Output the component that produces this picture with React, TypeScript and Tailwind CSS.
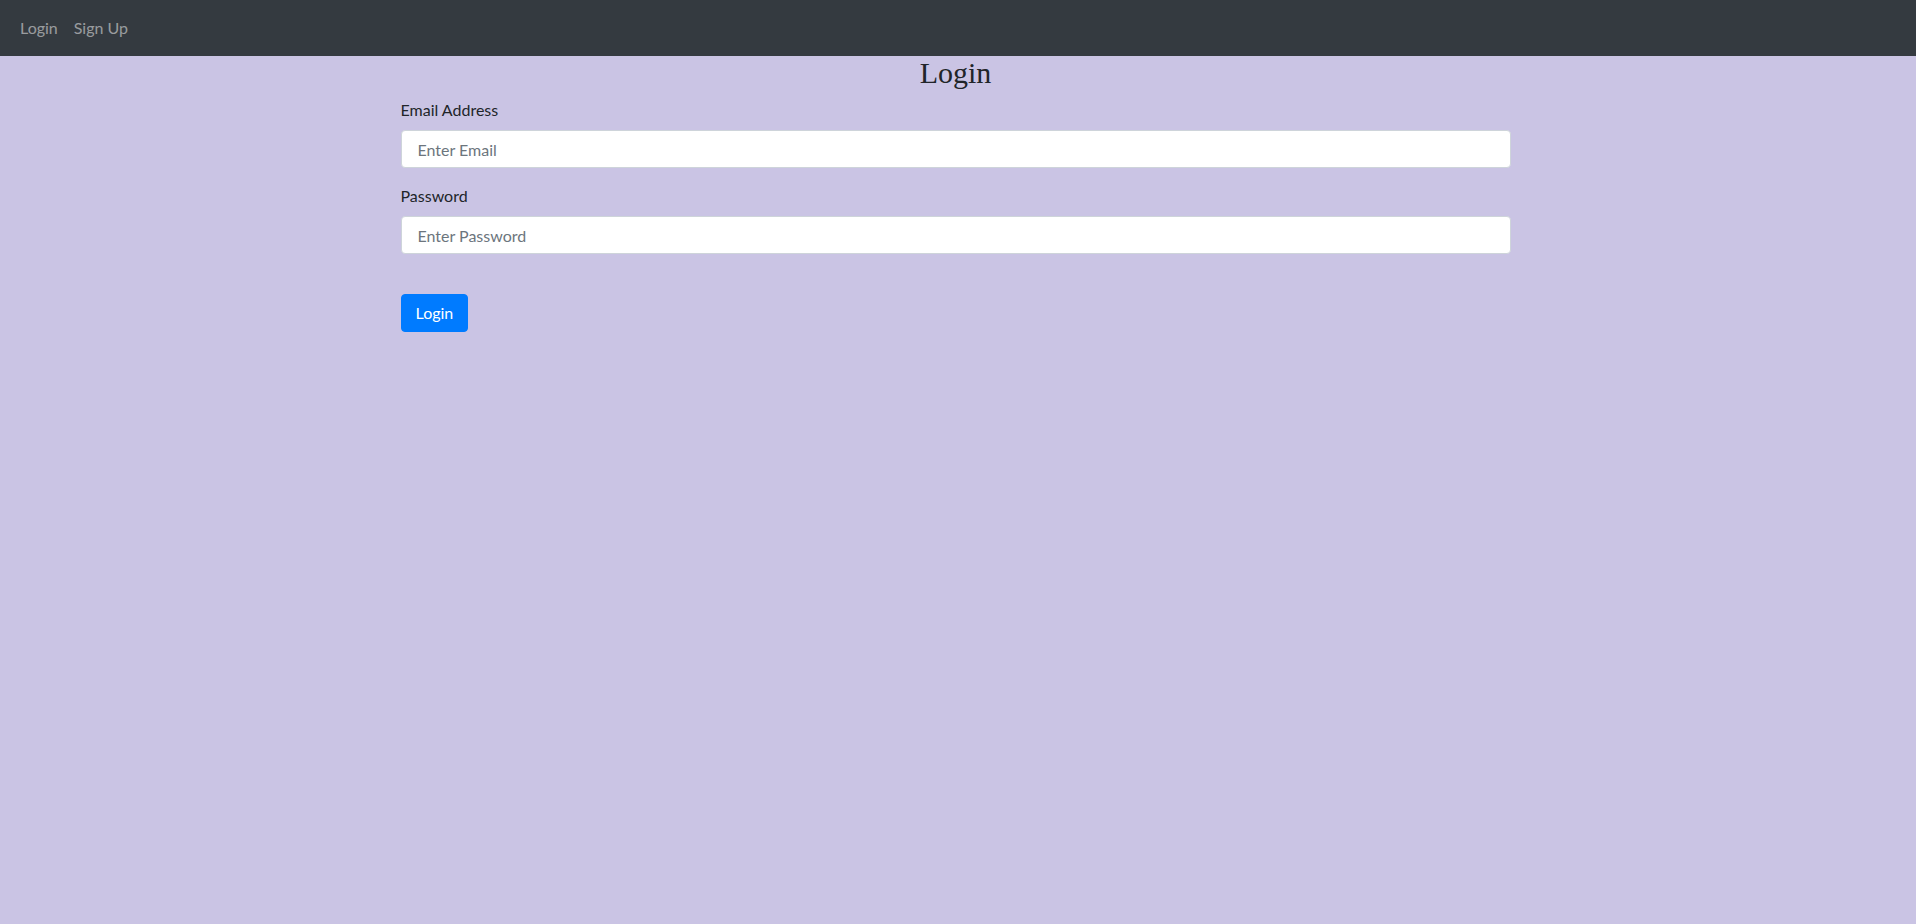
import { useState } from 'react';

const font = { fontFamily: '"Segoe UI", Lato, "Liberation Sans", sans-serif' };

export default function App() {
  const [email, setEmail] = useState('');
  const [password, setPassword] = useState('');

  return (
    <div className="min-h-screen bg-[#cac4e4] text-[#212529]" style={font}>
      <nav className="flex items-center h-[56px] bg-[#343a40] pl-3">
        <a href="#" className="px-2 text-[16px] text-white/50 hover:text-white/75">Login</a>
        <a href="#" className="px-2 text-[16px] text-white/50 hover:text-white/75">Sign Up</a>
      </nav>

      <div className="pr-[5px]">
        <div className="max-w-[1140px] mx-auto px-[15px]">
          <h1 className="text-center text-[30px] leading-[34px] mb-2 font-['Liberation_Serif',serif]">Login</h1>
          <form onSubmit={(e) => e.preventDefault()}>
            <div className="mb-4">
              <label className="block mb-2 text-[16px] leading-6">Email Address</label>
              <input
                type="email"
                value={email}
                onChange={(e) => setEmail(e.target.value)}
                placeholder="Enter Email"
                className="block w-full h-[38px] px-4 text-[16px] bg-white border border-[#ced4da] rounded placeholder:text-[#6c757d] outline-none"
              />
            </div>
            <div className="mb-4">
              <label className="block mb-2 text-[16px] leading-6">Password</label>
              <input
                type="password"
                value={password}
                onChange={(e) => setPassword(e.target.value)}
                placeholder="Enter Password"
                className="block w-full h-[38px] px-4 text-[16px] bg-white border border-[#ced4da] rounded placeholder:text-[#6c757d] outline-none"
              />
            </div>
            <div className="h-6" />
            <button type="submit" className="h-[38px] px-[14px] text-[16px] text-white bg-[#007bff] border border-[#007bff] rounded">
              Login
            </button>
          </form>
        </div>
      </div>
    </div>
  );
}
